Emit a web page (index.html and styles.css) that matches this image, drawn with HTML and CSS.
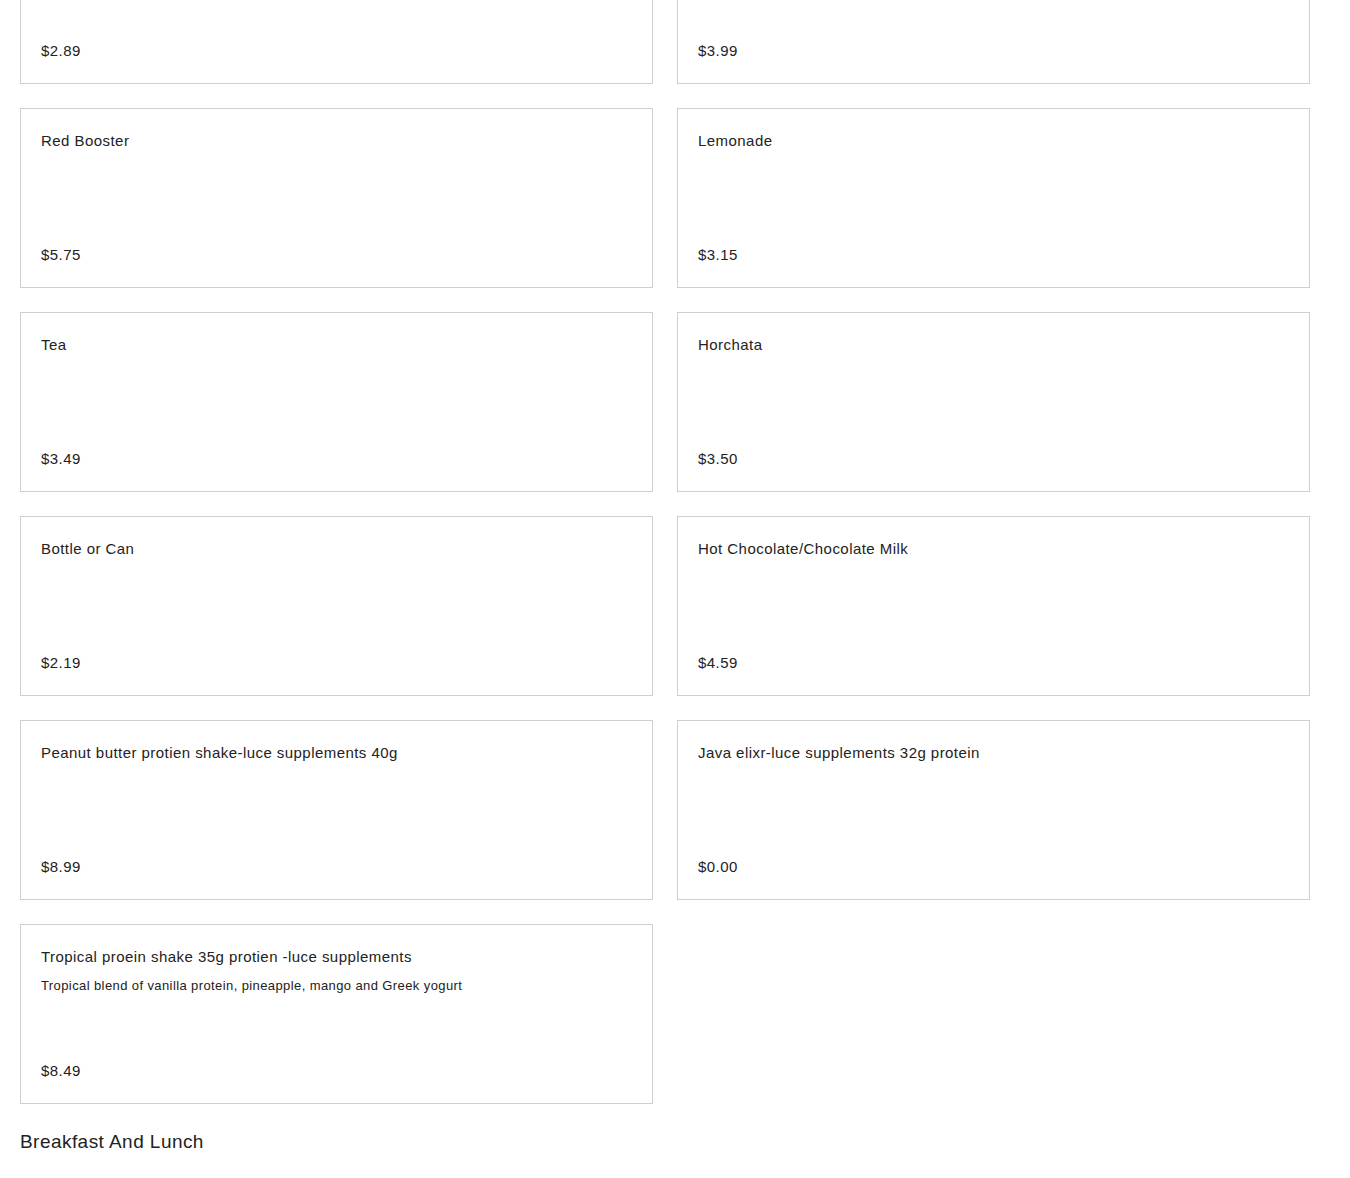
FILE: index.html
```html
<!DOCTYPE html>
<html lang="en">
<head>
<meta charset="utf-8">
<title>Menu</title>
<link rel="stylesheet" href="styles.css">
</head>
<body>
<main class="menu">
  <section class="grid">
    <div class="card"><div class="title">Coffee</div><div class="price">$2.89</div></div>
    <div class="card"><div class="title">Smoothie</div><div class="price">$3.99</div></div>
    <div class="card"><div class="title">Red Booster</div><div class="price">$5.75</div></div>
    <div class="card"><div class="title">Lemonade</div><div class="price">$3.15</div></div>
    <div class="card"><div class="title">Tea</div><div class="price">$3.49</div></div>
    <div class="card"><div class="title">Horchata</div><div class="price">$3.50</div></div>
    <div class="card"><div class="title">Bottle or Can</div><div class="price">$2.19</div></div>
    <div class="card"><div class="title">Hot Chocolate/Chocolate Milk</div><div class="price">$4.59</div></div>
    <div class="card"><div class="title">Peanut butter protien shake-luce supplements 40g</div><div class="price">$8.99</div></div>
    <div class="card"><div class="title">Java elixr-luce supplements 32g protein</div><div class="price">$0.00</div></div>
    <div class="card"><div class="title">Tropical proein shake 35g protien -luce supplements</div><div class="desc">Tropical blend of vanilla protein, pineapple, mango and Greek yogurt</div><div class="price">$8.49</div></div>
  </section>
  <h2 class="section-title">Breakfast And Lunch</h2>
</main>
</body>
</html>
```
FILE: styles.css
```css
html, body {
  margin: 0;
  padding: 0;
  background: #fff;
}
body {
  font-family: "Liberation Sans", Arial, sans-serif;
  color: #222;
  letter-spacing: 0.45px;
}
.menu {
  padding: 0 20px;
  margin-top: -96px;
}
.grid {
  display: grid;
  grid-template-columns: 633px 633px;
  gap: 24px;
}
.card {
  box-sizing: border-box;
  height: 180px;
  border: 1px solid #cfcfcf;
  padding: 22px 20px 22px 20px;
  display: flex;
  flex-direction: column;
}
.title {
  font-size: 15px;
  line-height: 20px;
}
.desc {
  font-size: 13px;
  line-height: 18px;
  margin-top: 10px;
  letter-spacing: 0.4px;
}
.price {
  margin-top: auto;
  font-size: 15px;
  line-height: 20px;
}
.section-title {
  font-weight: normal;
  font-size: 19px;
  line-height: 24px;
  margin: 26px 0 0 0;
}
```
